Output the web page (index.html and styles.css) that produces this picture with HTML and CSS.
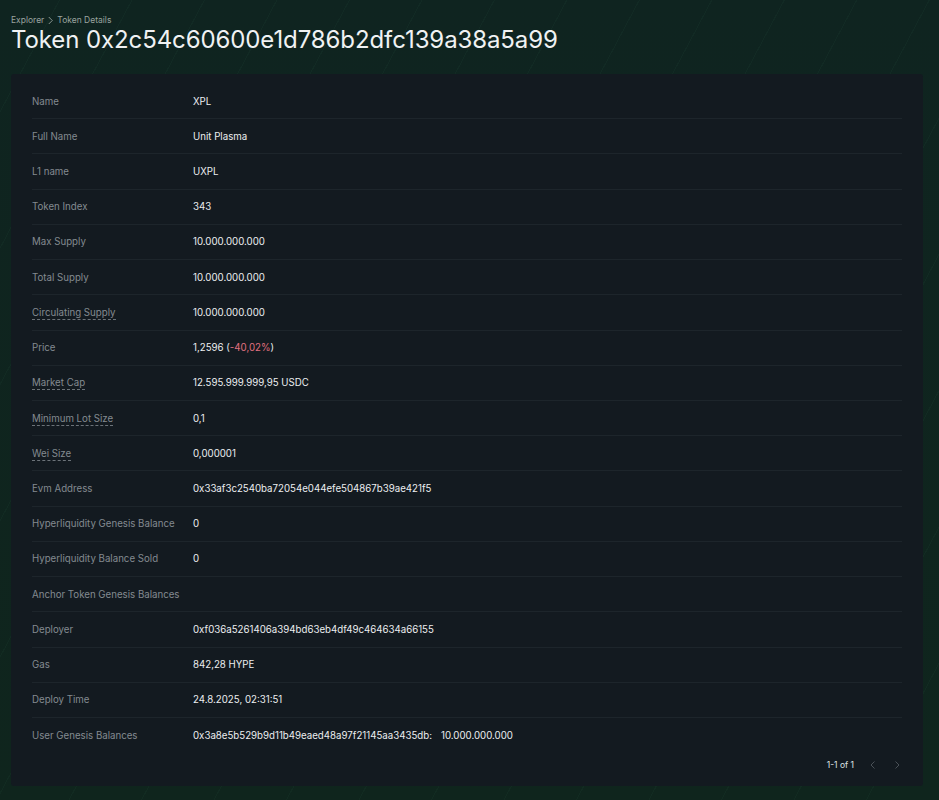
FILE: index.html
```html
<!DOCTYPE html>
<html lang="en">
<head>
<meta charset="utf-8">
<title>Token Details</title>
<link rel="stylesheet" href="styles.css">
</head>
<body>
<div class="page">
  <nav class="crumbs">
    <span>Explorer</span>
    <svg class="crumb-sep" viewBox="0 0 8 10" width="7" height="9"><path d="M2 1 L6 5 L2 9" fill="none" stroke="currentColor" stroke-width="1"/></svg>
    <span>Token Details</span>
  </nav>
  <h1 class="title">Token 0x2c54c60600e1d786b2dfc139a38a5a99</h1>

  <section class="card">
    <div class="rows">
      <div class="row"><div class="label">Name</div><div class="value">XPL</div></div>
      <div class="row"><div class="label">Full Name</div><div class="value">Unit Plasma</div></div>
      <div class="row"><div class="label">L1 name</div><div class="value">UXPL</div></div>
      <div class="row"><div class="label">Token Index</div><div class="value">343</div></div>
      <div class="row"><div class="label">Max Supply</div><div class="value">10.000.000.000</div></div>
      <div class="row"><div class="label">Total Supply</div><div class="value">10.000.000.000</div></div>
      <div class="row"><div class="label"><span class="hint">Circulating Supply</span></div><div class="value">10.000.000.000</div></div>
      <div class="row"><div class="label">Price</div><div class="value">1,2596 (<span class="neg">-40,02%</span>)</div></div>
      <div class="row"><div class="label"><span class="hint">Market Cap</span></div><div class="value">12.595.999.999,95 USDC</div></div>
      <div class="row"><div class="label"><span class="hint">Minimum Lot Size</span></div><div class="value">0,1</div></div>
      <div class="row"><div class="label"><span class="hint">Wei Size</span></div><div class="value">0,000001</div></div>
      <div class="row"><div class="label">Evm Address</div><div class="value">0x33af3c2540ba72054e044efe504867b39ae421f5</div></div>
      <div class="row"><div class="label">Hyperliquidity Genesis Balance</div><div class="value">0</div></div>
      <div class="row"><div class="label">Hyperliquidity Balance Sold</div><div class="value">0</div></div>
      <div class="row"><div class="label">Anchor Token Genesis Balances</div><div class="value"></div></div>
      <div class="row"><div class="label">Deployer</div><div class="value">0xf036a5261406a394bd63eb4df49c464634a66155</div></div>
      <div class="row"><div class="label">Gas</div><div class="value">842,28 HYPE</div></div>
      <div class="row"><div class="label">Deploy Time</div><div class="value">24.8.2025, 02:31:51</div></div>
      <div class="row last"><div class="label">User Genesis Balances</div><div class="value"><span class="addr">0x3a8e5b529b9d11b49eaed48a97f21145aa3435db:</span>10.000.000.000</div></div>
    </div>
    <div class="pager">
      <span class="pager-text">1-1 of 1</span>
      <svg class="pager-btn" viewBox="0 0 10 10" width="10" height="10"><path d="M6.5 1.5 L3 5 L6.5 8.5" fill="none" stroke="currentColor" stroke-width="1"/></svg>
      <svg class="pager-btn" viewBox="0 0 10 10" width="10" height="10"><path d="M3.5 1.5 L7 5 L3.5 8.5" fill="none" stroke="currentColor" stroke-width="1"/></svg>
    </div>
  </section>
</div>
</body>
</html>
```

FILE: styles.css
```css
html, body {
  margin: 0;
  padding: 0;
}
body {
  min-height: 800px;
  background-color: #0f231e;
  background-image:
    repeating-linear-gradient(118deg, transparent 0 52px, rgba(70, 150, 110, 0.05) 52px 53px, transparent 53px 64px),
    linear-gradient(180deg, #0f2420 0%, #0f251d 100%);
  font-family: Inter, "Noto Sans", "Liberation Sans", sans-serif;
  color: #e6e8ea;
}
.page {
  padding: 14px 16px 13px 11px;
}
.crumbs {
  display: flex;
  align-items: center;
  gap: 3px;
  font-size: 8.5px;
  color: #9aa39f;
  height: 12px;
}
.crumb-sep {
  color: #9aa39f;
}
.title {
  margin: 0;
  font-size: 24px;
  font-weight: 400;
  letter-spacing: -0.1px;
  line-height: 28px;
  color: #f0f2f3;
}
.card {
  margin-top: 20px;
  background: #131a20;
  border-radius: 3px;
  padding: 10px 21px 9px;
}
.rows {
  display: flex;
  flex-direction: column;
}
.row {
  display: flex;
  align-items: center;
  height: 35.22px;
  border-bottom: 1px solid #1d252b;
  box-sizing: border-box;
  font-size: 9.7px;
}
.row.last {
  border-bottom: none;
}
.label {
  width: 161px;
  flex: none;
  color: #838a90;
}
.hint {
  border-bottom: 1px dashed #6c7379;
  padding-bottom: 1px;
}
.value {
  color: #eceef0;
}
.addr {
  margin-right: 9px;
}
.neg {
  color: #e0707f;
}
.pager {
  display: flex;
  justify-content: flex-end;
  align-items: center;
  gap: 14px;
  height: 24px;
}
.pager-text {
  font-size: 8.5px;
  color: #dfe2e4;
}
.pager-btn {
  color: #4a5157;
}
```
